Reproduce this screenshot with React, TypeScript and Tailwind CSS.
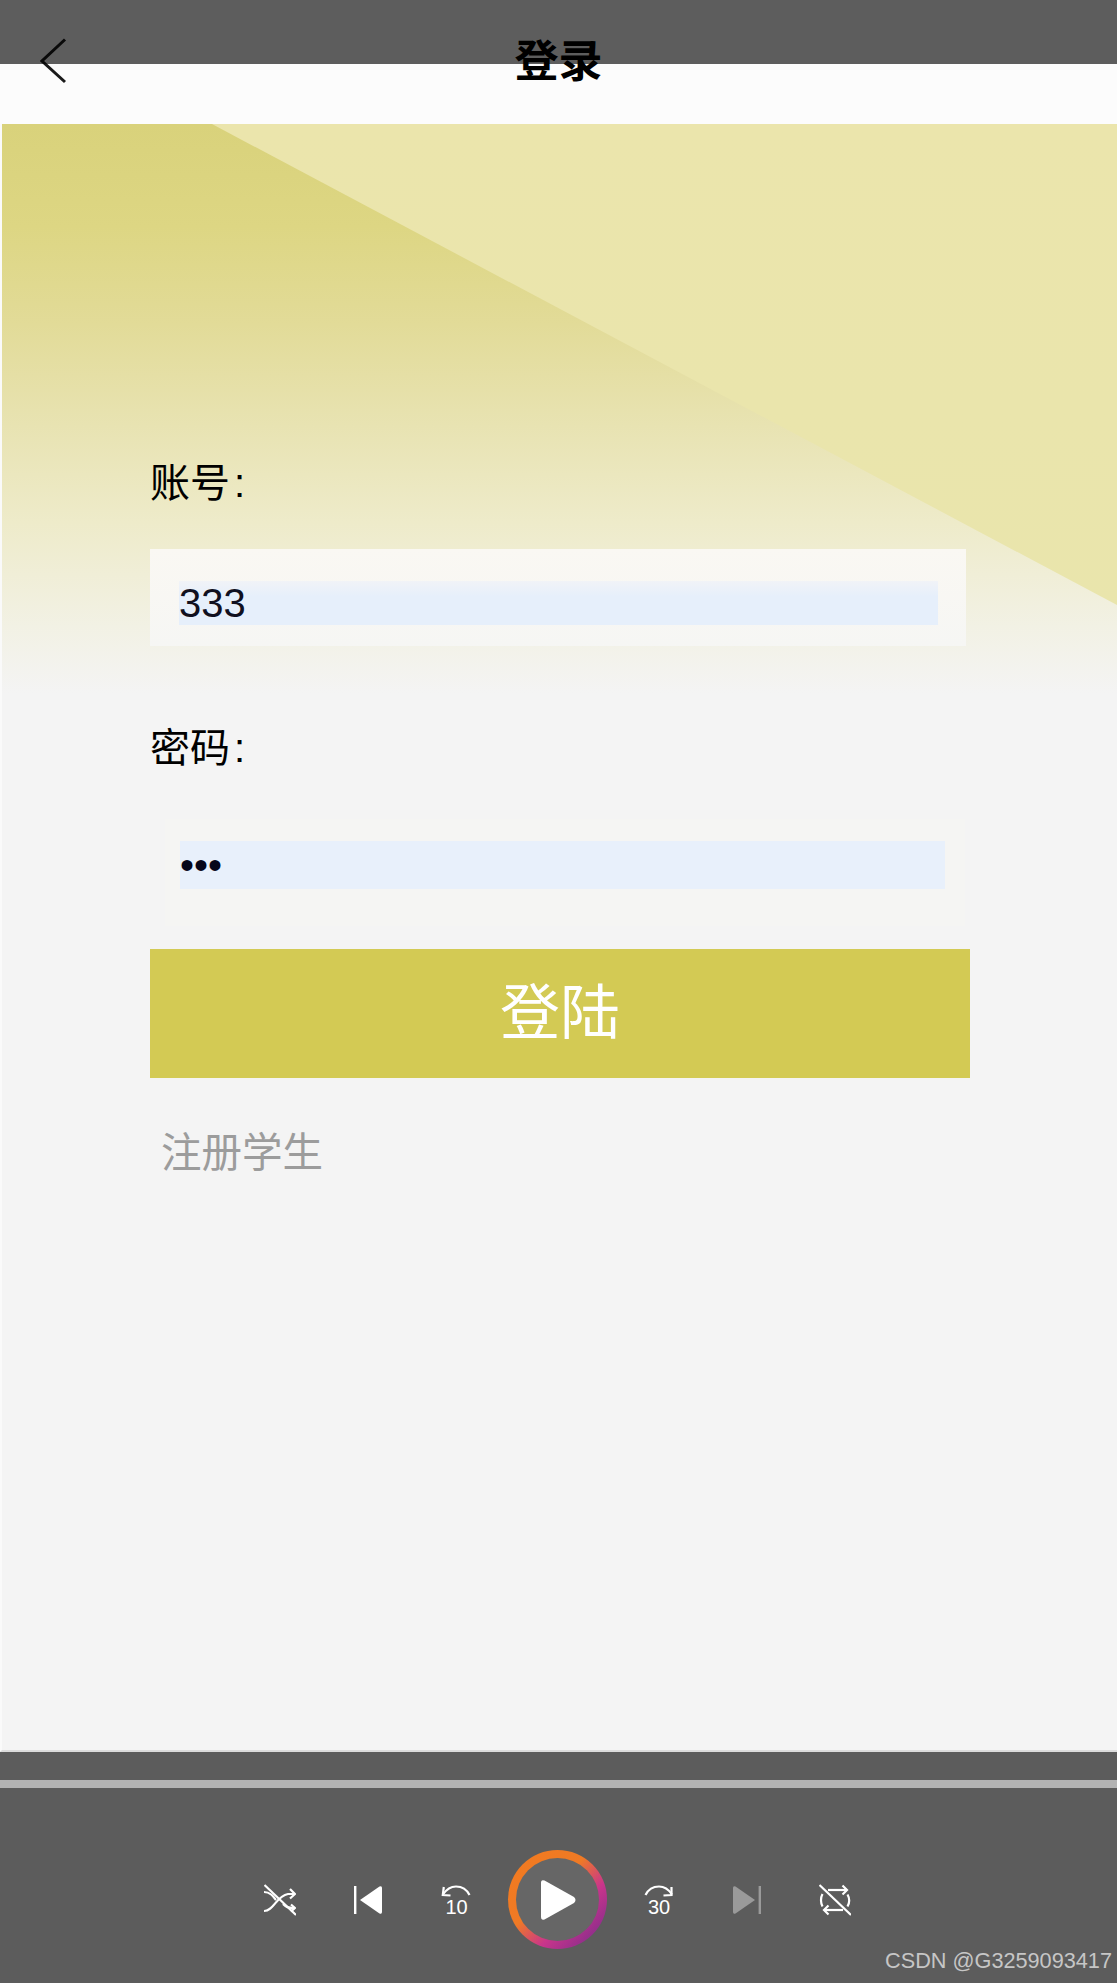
import React from "react";

const font = "font-['Liberation_Sans','Noto_Sans_CJK_SC',sans-serif]";

function Shuffle() {
  return (
    <svg width="32" height="32" viewBox="0 0 32 32" fill="none" stroke="white" strokeWidth="2.2">
      <path d="M0.5 1 L32 31" />
      <path d="M0 8 C6 8 9 12 12 16" />
      <path d="M0 27 C10 27 12 12 24 10 H30" />
      <path d="M26 5 L31 10 L26 14.5" />
      <path d="M19 20 C22 23 24 24 30 24" />
      <path d="M27 20.5 L31 24 L27 27.5" />
    </svg>
  );
}

function Prev() {
  return (
    <svg width="32" height="32" viewBox="0 0 32 32">
      <rect x="2" y="2" width="2.4" height="28" fill="white" />
      <path d="M8 16 L27.5 2.6 Q30 1.5 30 4 V28 Q30 30.5 27.5 29.4 Z" fill="white" />
    </svg>
  );
}

function Next() {
  return (
    <svg width="32" height="32" viewBox="0 0 32 32">
      <rect x="27.6" y="2" width="2.4" height="28" fill="#9a9a9a" />
      <path d="M24 16 L4.5 2.6 Q2 1.5 2 4 V28 Q2 30.5 4.5 29.4 Z" fill="#9a9a9a" />
    </svg>
  );
}

function Replay() {
  return (
    <svg className="overflow-visible" width="32" height="32" viewBox="0 0 32 32" fill="none" stroke="white" strokeWidth="2.2">
      <path d="M3 10.5 C7 4.5 11 2.5 16 2.5 C22 2.5 27 6 29.5 11" />
      <path d="M3.8 3 L2.8 11 L10.5 11.5" />
      <text x="16.5" y="29.5" textAnchor="middle" fontSize="20" fill="white" stroke="none" fontFamily="Liberation Sans">10</text>
    </svg>
  );
}

function Forward() {
  return (
    <svg className="overflow-visible" width="32" height="32" viewBox="0 0 32 32" fill="none" stroke="white" strokeWidth="2.2">
      <path d="M29 10.5 C25 4.5 21 2.5 16 2.5 C10 2.5 5 6 2.5 11" />
      <path d="M28.5 3 V11 L20.5 11.5" />
      <text x="16" y="29.5" textAnchor="middle" fontSize="20" fill="white" stroke="none" fontFamily="Liberation Sans">30</text>
    </svg>
  );
}

function Repeat() {
  return (
    <svg width="32" height="32" viewBox="0 0 32 32" fill="none" stroke="white" strokeWidth="2.2">
      <path d="M0.5 1 L32 31" />
      <path d="M9 6 H28" />
      <path d="M23.5 1.5 L28 6 L23.5 10.5" />
      <path d="M24 26 H5" />
      <path d="M9.5 21.5 L5 26 L9.5 30.5" />
      <path d="M3.5 10 C1.5 13.5 1.5 19 3.5 22.5" />
      <path d="M28.5 10.5 C30.5 14 30.5 19 28.5 22.5" />
    </svg>
  );
}

export default function App() {
  return (
    <div className={`relative flex h-[1983px] w-[1117px] flex-col overflow-hidden bg-[#5c5c5c] ${font}`}>
      <div className="pointer-events-none absolute inset-x-0 top-0 z-10 h-[64px] bg-black/[0.63]" />

      <header className="grid h-[124px] grid-cols-[1fr_auto_1fr] bg-[#fcfcfc]">
        <svg className="ml-[40px] mt-[38px]" width="27" height="46" viewBox="0 0 27 46" fill="none" stroke="#1a1a1a" strokeWidth="3">
          <path d="M25 1.5 L2 23 L25 44" />
        </svg>
        <h1 className="mt-[39px] h-[46px] text-[44px] leading-[46px] font-bold text-black">登录</h1>
        <div />
      </header>

      <main className="relative h-[1628px] border-b-2 border-l-2 border-b-[#dcdcdc] border-l-[#fafafa] bg-[#f4f4f4]">
        <div className="absolute left-0 top-0 h-[570px] w-full bg-[linear-gradient(180deg,#d9d27b_0%,#ddd683_18%,#e2db98_35%,#e8e3b2_53%,#eeebca_70%,#f2f1e4_88%,#f4f4f4_100%)]" />
        <div className="absolute left-0 top-0 h-[570px] w-full bg-[linear-gradient(180deg,#ebe5ac_0%,#e9e5ac_100%)] [clip-path:polygon(210px_0,100%_0,100%_481px)]" />

        <form className="relative ml-[148px] w-[820px] pt-[334px]">
          <label className="block h-[50px] text-[40px] leading-[50px] text-black">
            账号<span className="ml-[4px]">:</span>
          </label>
          <div className="mt-[41px] h-[97px] w-[816px] bg-[linear-gradient(180deg,#faf8f3,#f6f6f4)] pl-[29px] pt-[32px]">
            <input
              readOnly
              value="333"
              className="block h-[44px] w-[759px] bg-[linear-gradient(180deg,#f1f3f7_0%,#e6effb_35%,#e6effb_100%)] text-[40px] leading-[44px] text-[#10101f] outline-none"
            />
          </div>

          <label className="mt-[77px] block h-[50px] text-[40px] leading-[50px] text-black">
            密码<span className="ml-[4px]">:</span>
          </label>
          <div className="ml-[15px] mt-[46px] h-[107px] w-[800px] bg-[#f5f5f3] pl-[15px] pt-[22px]">
            <input
              readOnly
              type="password"
              value="333"
              className="block h-[48px] w-[765px] bg-[#e8f0fb] text-[40px] leading-[48px] text-[#06061a] outline-none"
            />
          </div>

          <button type="button" className="mt-[23px] block h-[129px] w-[820px] bg-[#d3ca54] text-[60px] leading-[129px] text-white">
            登陆
          </button>

          <a className="mt-[50px] block h-[50px] pl-[11px] text-[40.5px] leading-[50px] text-[#9c9c9c]">注册学生</a>
        </form>
      </main>

      <div className="mt-[28px] h-[8px] bg-[#b3b3b3]" />

      <div className="mr-[2px] mt-[62px] flex items-center justify-center gap-[36px]">
        <div className="flex items-center gap-[56px]">
          <Shuffle />
          <Prev />
          <Replay />
        </div>
        <button
          type="button"
          className="flex h-[99px] w-[99px] items-center justify-center rounded-full bg-[linear-gradient(135deg,#f27a1f_0%,#ef7a25_42%,#c9358b_65%,#6f2a8c_100%)]"
        >
          <span className="flex h-[83px] w-[83px] items-center justify-center rounded-full bg-[#666666]">
            <svg width="38" height="42" viewBox="0 0 38 42">
              <path d="M2 4 Q2 0 5.5 1.6 L35 18 Q38 21 35 24 L5.5 40.4 Q2 42 2 38 Z" fill="white" />
            </svg>
          </span>
        </button>
        <div className="flex items-center gap-[56px]">
          <Forward />
          <Next />
          <Repeat />
        </div>
      </div>

      <span className="absolute bottom-[10px] right-[5px] text-[21.7px] leading-[24px] text-[#c6c6c6]">CSDN @G3259093417</span>
    </div>
  );
}
